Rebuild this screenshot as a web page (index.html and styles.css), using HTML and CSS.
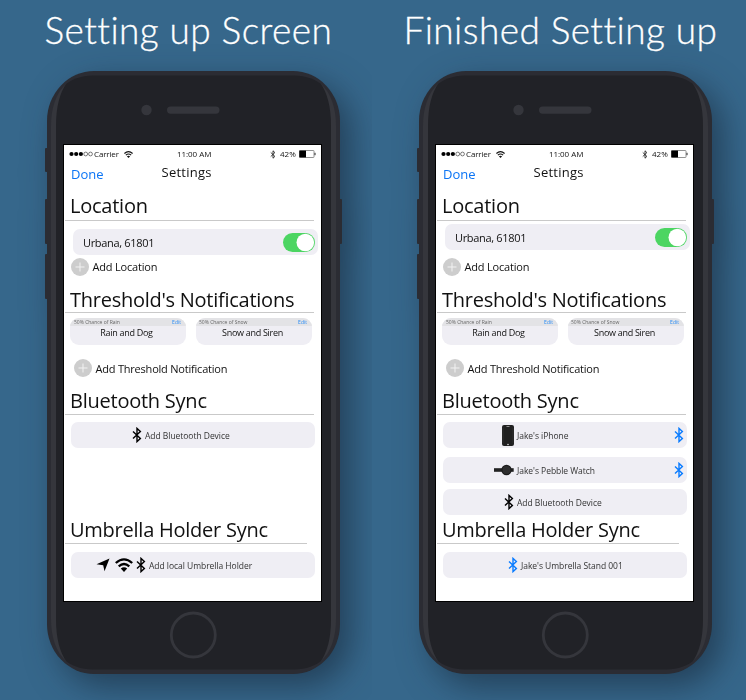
FILE: index.html
```html
<!DOCTYPE html>
<html lang="en">
<head>
<meta charset="utf-8">
<title>Settings</title>
<link rel="stylesheet" href="styles.css">
</head>
<body>
<svg width="0" height="0" class="defs">
  <symbol id="bt" viewBox="0 0 10 16"><path d="M1 4.400L8.400 11.400L5 14.600V1.400L8.400 4.600L1 11.600" fill="none" stroke="currentColor" stroke-width="1.400"/></symbol>
  <symbol id="wifi" viewBox="0 0 18 14"><g fill="none" stroke="currentColor" stroke-width="2.300"><path d="M.8 5Q9 -2.200 17.200 5"/><path d="M3.700 8.300Q9 3.800 14.300 8.300"/></g><path d="M5.800 10.600Q9 8 12.200 10.600L9 14Z" fill="currentColor"/></symbol>
  <symbol id="shell" viewBox="0 0 297 603">
    <g fill="#2b2c33"><rect x="0" y="77" width="4" height="24" rx="1"/><rect x="0" y="128" width="4" height="45" rx="1"/><rect x="0" y="183" width="4" height="45" rx="1"/><rect x="292" y="128" width="5" height="45" rx="1"/></g>
    <rect x="2" width="293" height="603" rx="47" ry="50" fill="#2b2c33"/>
    <path d="M6 55C6 37 11 22 21 13L276 13C286 22 291 37 291 55V548C291 566 286 581 276 590H21C11 581 6 566 6 548Z" fill="#35363c"/>
    <path d="M11 55C11 35 15 22 21 13C30 6 40 4.500 52 4.500H245C257 4.500 267 6 276 13C282 22 286 35 286 55V548C286 568 282 581 276 590C267 597 257 598.500 245 598.500H52C40 598.500 30 597 21 590C15 581 11 568 11 548Z" fill="#212227"/>
    <circle cx="101.500" cy="39" r="5.200" fill="#35363c"/><rect x="122" y="35.500" width="52.500" height="7.200" rx="3.600" fill="#35363c"/>
    <circle cx="148.300" cy="564" r="22" fill="none" stroke="#35363c" stroke-width="2.800"/>
  </symbol>
  <symbol id="plus" viewBox="0 0 18 18"><circle cx="9" cy="9" r="9" fill="#cdcdcd"/><path d="M9 4.500V13.500M4.500 9H13.500" stroke="#f2f2f2" stroke-width="1"/></symbol>
  <symbol id="toggle" viewBox="0 0 32 19"><rect width="32" height="19" rx="9.500" fill="#4cd562"/><circle cx="22.300" cy="9.500" r="8.800" fill="#fff"/></symbol>
  <symbol id="battery" viewBox="0 0 17 8"><rect x=".5" y=".5" width="14.500" height="7" rx=".6" fill="#fff" stroke="#777" stroke-width=".8"/><rect x=".3" y=".6" width="6.700" height="6.800"/><path d="M16 2.800V5.200" stroke="#222"/></symbol>
  <symbol id="signal" viewBox="0 0 25 6"><circle cx="2.500" cy="3" r="2.100"/><circle cx="7.200" cy="3" r="2.100"/><circle cx="11.900" cy="3" r="2.100"/><g fill="none" stroke="#444" stroke-width=".7"><circle cx="16.700" cy="3" r="1.900"/><circle cx="21.500" cy="3" r="1.900"/></g></symbol>
</svg>

<main class="board">
  <section class="panel">
    <h1 class="title">Setting up Screen</h1>
    <div class="phone">
      <svg class="shell"><use href="#shell"/></svg>
      <div class="screen">
        <div class="status"><svg class="signal"><use href="#signal"/></svg><span class="carrier">Carrier</span><svg class="wifi-s"><use href="#wifi"/></svg><span class="clock">11:00 AM</span><svg class="bt-s"><use href="#bt"/></svg><span class="pct">42%</span><svg class="battery"><use href="#battery"/></svg></div>
        <div class="nav"><span class="done">Done</span><span class="heading">Settings</span></div>
        <h2 class="loc">Location</h2>
        <div class="place"><span>Urbana, 61801</span><svg class="toggle"><use href="#toggle"/></svg></div>
        <div class="add"><svg class="plus"><use href="#plus"/></svg><span>Add Location</span></div>
        <h2 class="thr">Threshold's Notifications</h2>
        <div class="cards">
          <div class="card"><div class="cap"><span>50% Chance of Rain</span><span class="edit">Edit</span></div><p>Rain and Dog</p></div>
          <div class="card"><div class="cap"><span>50% Chance of Snow</span><span class="edit">Edit</span></div><p>Snow and Siren</p></div>
        </div>
        <div class="add second"><svg class="plus"><use href="#plus"/></svg><span>Add Threshold Notification</span></div>
        <h2 class="sync">Bluetooth Sync</h2>
        <div class="rows">
          <div class="row"><span class="lead"><svg class="bt"><use href="#bt"/></svg></span><span>Add Bluetooth Device</span></div>
        </div>
        <h2 class="umb">Umbrella Holder Sync</h2>
        <div class="row holder"><span class="lead"><svg class="arrow" viewBox="0 0 14 14"><path d="M13.500 .5L8.500 13.200L7.200 7.200L.5 6.300Z"/></svg><svg class="wifi"><use href="#wifi"/></svg><svg class="bt"><use href="#bt"/></svg></span><span>Add local Umbrella Holder</span></div>
      </div>
    </div>
  </section>

  <section class="panel finished">
    <h1 class="title">Finished Setting up</h1>
    <div class="phone">
      <svg class="shell"><use href="#shell"/></svg>
      <div class="screen">
        <div class="status"><svg class="signal"><use href="#signal"/></svg><span class="carrier">Carrier</span><svg class="wifi-s"><use href="#wifi"/></svg><span class="clock">11:00 AM</span><svg class="bt-s"><use href="#bt"/></svg><span class="pct">42%</span><svg class="battery"><use href="#battery"/></svg></div>
        <div class="nav"><span class="done">Done</span><span class="heading">Settings</span></div>
        <h2 class="loc">Location</h2>
        <div class="place"><span>Urbana, 61801</span><svg class="toggle"><use href="#toggle"/></svg></div>
        <div class="add"><svg class="plus"><use href="#plus"/></svg><span>Add Location</span></div>
        <h2 class="thr">Threshold's Notifications</h2>
        <div class="cards">
          <div class="card"><div class="cap"><span>50% Chance of Rain</span><span class="edit">Edit</span></div><p>Rain and Dog</p></div>
          <div class="card"><div class="cap"><span>50% Chance of Snow</span><span class="edit">Edit</span></div><p>Snow and Siren</p></div>
        </div>
        <div class="add second"><svg class="plus"><use href="#plus"/></svg><span>Add Threshold Notification</span></div>
        <h2 class="sync">Bluetooth Sync</h2>
        <div class="rows">
          <div class="row"><span class="lead"><svg class="device" viewBox="0 0 12 21"><rect width="12" height="21" rx="2" fill="#202020"/><path d="M1 2.500V18.500M11 2.500V18.500" stroke="#3a3a3a" stroke-width=".6"/><path d="M4.500 1.500H7.500" stroke="#aaa" stroke-width=".8"/><circle cx="6" cy="19.500" r=".8" fill="#ddd"/></svg></span><span>Jake's iPhone</span><svg class="bt linked"><use href="#bt"/></svg></div>
          <div class="row"><span class="lead"><svg class="watch" viewBox="0 0 20 12"><rect y="4.200" width="19.700" height="3.600" fill="#222"/><circle cx="12.500" cy="6" r="5.200" fill="#1b1b1b"/><circle cx="12.500" cy="6" r="4" fill="#2e2e2e"/></svg></span><span>Jake's Pebble Watch</span><svg class="bt linked"><use href="#bt"/></svg></div>
          <div class="row"><span class="lead"><svg class="bt"><use href="#bt"/></svg></span><span>Add Bluetooth Device</span></div>
        </div>
        <h2 class="umb">Umbrella Holder Sync</h2>
        <div class="row holder"><span class="lead"><svg class="bt blue"><use href="#bt"/></svg></span><span>Jake's Umbrella Stand 001</span></div>
      </div>
    </div>
  </section>
</main>
</body>
</html>
```
FILE: styles.css
```css
* { box-sizing: border-box; margin: 0; padding: 0; }
body { width: 746px; height: 700px; overflow: hidden; font-family: "Open Sans", "Noto Sans", sans-serif; color: #111; white-space: nowrap; }
svg { display: block; flex: none; }
.defs { position: absolute; }
.board { display: grid; grid-template-columns: 372px 374px; height: 700px; }
.panel { background: #36678b; overflow: hidden; }
.title { height: 71px; padding: 8px 0 0 44.500px; font: 300 37px/44px Lato, "Open Sans", sans-serif; letter-spacing: .42px; font-variant-ligatures: none; color: #fff; -webkit-text-stroke: .3px #fff; }
.finished .title { padding-left: 31.500px; }

.phone { display: grid; width: 297px; height: 603px; margin-left: 45px; filter: drop-shadow(11px 12px 16px rgba(15, 25, 40, .5)); }
.shell { grid-area: 1 / 1; width: 297px; height: 603px; }
.screen { grid-area: 1 / 1; z-index: 1; width: 259px; height: 458px; margin: 73px 0 0 18px; border: 1px solid #000; background: #fff; }

.status { display: flex; align-items: center; height: 18px; padding-left: 5px; font-size: 8px; line-height: 18px; }
.signal { width: 25px; height: 6px; }
.carrier { width: 24px; letter-spacing: -.15px; }
.wifi-s { width: 9px; height: 7px; margin-left: 6px; }
.clock { width: 35px; margin-left: 44px; letter-spacing: -.05px; }
.bt-s { width: 6px; height: 9px; margin-left: 58px; }
.pct { width: 16px; margin-left: 4px; }
.battery { width: 17px; height: 8px; margin-left: 3px; }

.nav { display: flex; height: 24px; padding-left: 7px; font-size: 13px; line-height: 18px; }
.done { width: 33px; padding-top: 2px; color: #0a74f5; }
.heading { margin-left: 57.500px; letter-spacing: .25px; }

h2 { width: 249px; height: 27px; margin-left: 1px; border-bottom: 1px solid #c9c9c9; padding-left: 5px; font-size: 20px; font-weight: 400; line-height: 26px; letter-spacing: -.24px; }
.loc { margin-top: 7px; line-height: 24px; }
.thr { height: 26px; margin-top: 11px; letter-spacing: -.26px; }
.sync { margin-top: 11px; }
.umb { width: 242px; margin-top: 69px; }
.finished .umb { margin-top: 2px; }

.place { display: flex; justify-content: space-between; align-items: center; width: 245px; height: 26px; margin: 8px 0 3px 9px; padding: 0 3px 0 10px; border-radius: 7px; background: #efeef4; font-size: 11px; letter-spacing: -.32px; }
.finished .place { margin: 3px 0 8px 9px; }
.toggle { width: 32px; height: 19px; }
.add { display: flex; align-items: center; gap: 3.500px; height: 18px; padding-left: 7px; font-size: 11px; line-height: 16px; letter-spacing: -.19px; }
.add span { padding-bottom: 1px; }
.second { margin-top: 14px; padding-left: 10px; letter-spacing: -.21px; }
.second span { padding: 1px 0 0; }
.plus { width: 18px; height: 18px; }

.cards { display: flex; gap: 10px; margin: 5px 0 0 6px; }
.card { width: 116px; height: 27px; border-radius: 9px; background: #efeef4; overflow: hidden; text-align: center; }
.cap { display: flex; justify-content: space-between; height: 8px; padding: 0 5px 0 4px; background: #e3e3e6; font-size: 5px; line-height: 9px; color: #666; }
.card + .card .cap { padding-left: 3px; }
.edit { color: #2a8cf5; }
.card p { padding-right: 3px; font-size: 9px; line-height: 14px; letter-spacing: -.29px; }

.rows { display: grid; margin: 7px 0 0 7px; }
.row { display: flex; align-items: center; width: 244px; height: 26px; border-radius: 7px; background: #efeef4; font-size: 8.500px; color: #333; letter-spacing: -.04px; }
.row + .row { margin-top: 9px; }
.row + .row + .row { margin-top: 6px; }
.row > span:nth-child(2) { padding-top: 1px; }
.holder { margin: 8px 0 0 7px; }
.lead { display: flex; align-items: center; justify-content: flex-end; gap: 3.500px; width: 74px; padding-right: 3px; color: #000; }
.holder .lead { width: 78px; }
.bt { width: 10px; height: 16px; }
.blue, .linked { color: #0a7cff; }
.linked { margin: 0 3px 0 auto; }
.arrow { width: 14px; height: 14px; margin-right: 1px; }
.wifi { width: 18px; height: 14px; }
.device { width: 12px; height: 21px; }
.watch { width: 20px; height: 12px; }
```
